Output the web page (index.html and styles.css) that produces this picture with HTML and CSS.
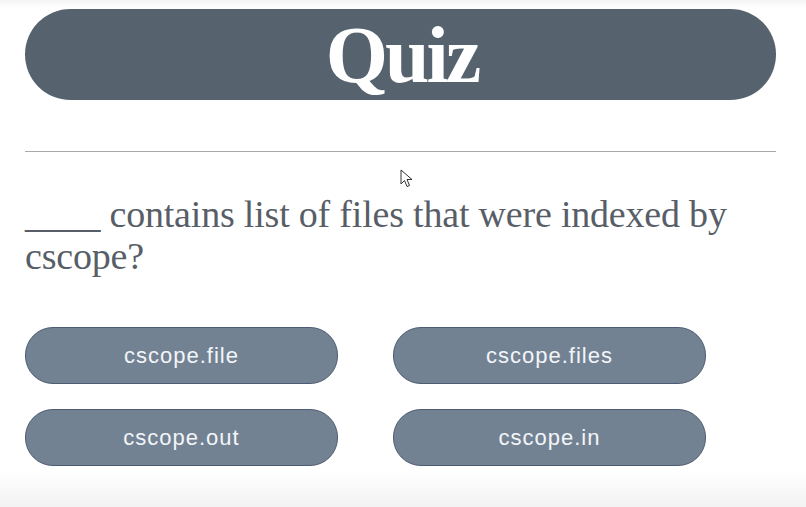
FILE: index.html
```html
<!DOCTYPE html>
<html lang="en">
<head>
<meta charset="utf-8">
<title>Quiz</title>
<link rel="stylesheet" href="styles.css">
</head>
<body>
<main class="page">
  <header class="banner"><h1 class="title">Quiz</h1></header>
  <hr class="rule">
  <p class="question">____ contains list of files that were indexed by cscope?</p>
  <div class="answers">
    <button class="answer">cscope.file</button>
    <button class="answer">cscope.files</button>
    <button class="answer">cscope.out</button>
    <button class="answer">cscope.in</button>
  </div>
  <svg class="cursor" width="14" height="20" viewBox="0 0 14 20"><path d="M1 1 L1 15 L4.5 11.5 L7 17.5 L9.5 16.5 L7 10.5 L12 10.5 Z" fill="#fff" stroke="#333" stroke-width="1" stroke-linejoin="round"/></svg>
</main>
</body>
</html>
```
FILE: styles.css
```css
html, body {
  margin: 0;
  padding: 0;
}
body {
  width: 806px;
  height: 507px;
  overflow: hidden;
  background: linear-gradient(to bottom, #f4f4f4 0px, #ffffff 8px, #ffffff 470px, #f2f2f2 507px);
}
.page {
  position: relative;
  padding: 9px 30px 0 25px;
  display: flex;
  flex-direction: column;
}
.banner {
  height: 91px;
  border-radius: 46px;
  background: #56626d;
  display: flex;
  align-items: center;
  justify-content: center;
}
.title {
  margin: 0 0 0 3px;
  font-family: "Liberation Serif", "Times New Roman", serif;
  font-weight: bold;
  font-size: 80px;
  letter-spacing: -3px;
  line-height: 1;
  color: #ffffff;
}
.rule {
  margin: 51px 0 0 0;
  border: 0;
  border-top: 1px solid #a9a9a9;
  height: 0;
}
.question {
  margin: 41px 0 0 0;
  font-family: "Liberation Serif", "Times New Roman", serif;
  font-size: 38px;
  letter-spacing: -0.2px;
  line-height: 42px;
  color: #585e67;
}
.answers {
  margin-top: 50px;
  display: grid;
  grid-template-columns: 313px 313px;
  column-gap: 55px;
  row-gap: 25px;
}
.answer {
  height: 57px;
  border: 1px solid #4d5c72;
  border-radius: 28px;
  background: #738293;
  color: #f2f5f8;
  font-family: "Liberation Sans", Arial, sans-serif;
  font-size: 22px;
  letter-spacing: 1px;
  padding: 0;
}
.cursor {
  position: absolute;
  left: 400px;
  top: 169px;
}
```
